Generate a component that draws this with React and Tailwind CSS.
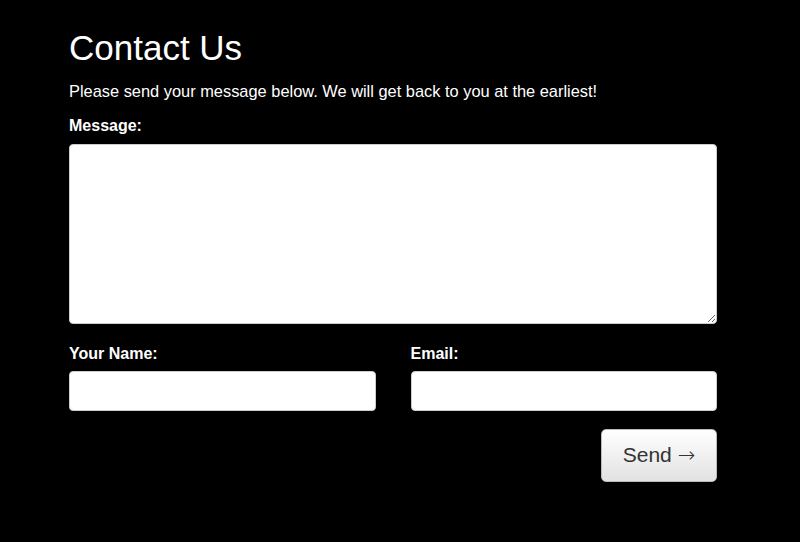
export default function App() {
  return (
    <div className="min-h-[542px] w-full bg-black text-white" style={{ fontFamily: "'Liberation Sans', Arial, sans-serif" }}>
      <div className="w-[648px] ml-[69px] pt-[28px]">
        <h1 className="text-[35px] leading-[40px] font-normal">Contact Us</h1>
        <p className="mt-[13px] text-[16.4px] leading-[20px]">Please send your message below. We will get back to you at the earliest!</p>

        <label className="block mt-[15px] text-[16px] leading-[20px] font-bold">Message:</label>
        <textarea className="block mt-[8px] w-full h-[180px] bg-white rounded-[4px] border border-[#ccc] text-black p-2 outline-none" />

        <div className="flex gap-[35px] mt-[20px]">
          <div className="flex-1">
            <label className="block text-[16px] leading-[20px] font-bold">Your Name:</label>
            <input className="block mt-[7px] w-full h-[40px] bg-white rounded-[4px] border border-[#ccc] text-black px-2 outline-none" />
          </div>
          <div className="flex-1">
            <label className="block text-[16px] leading-[20px] font-bold">Email:</label>
            <input className="block mt-[7px] w-full h-[40px] bg-white rounded-[4px] border border-[#ccc] text-black px-2 outline-none" />
          </div>
        </div>

        <div className="flex justify-end mt-[18px]">
          <button className="w-[116px] h-[53px] rounded-[5px] border border-[#bbb] bg-gradient-to-b from-white to-[#e2e2e2] text-[#333] text-[21px]">
            Send <span className="font-['DejaVu_Sans'] font-extralight text-[21px]">→</span>
          </button>
        </div>
      </div>
    </div>
  );
}
